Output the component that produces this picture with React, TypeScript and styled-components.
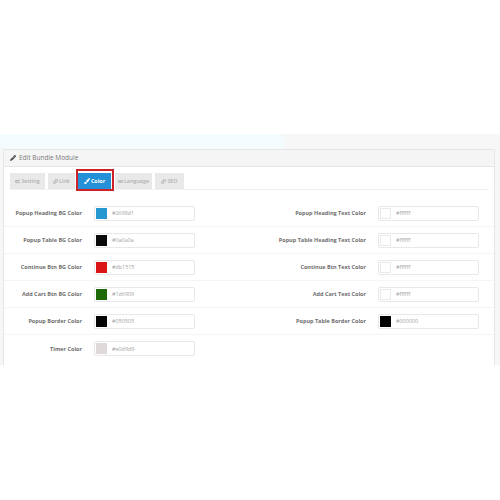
import React from 'react';
import styled, { createGlobalStyle } from 'styled-components';
import { FaCogs, FaLanguage, FaLink, FaPaintBrush, FaPencilAlt } from 'react-icons/fa';

const GlobalStyle = createGlobalStyle`
  html, body {
    margin: 0;
    padding: 0;
    background: #fff;
  }
  * {
    box-sizing: border-box;
  }
`;

const leftFields = [
  { label: 'Popup Heading BG Color', value: '#2698d1', color: '#2698d1' },
  { label: 'Popup Table BG Color', value: '#0a0a0a', color: '#0a0a0a' },
  { label: 'Continue Btn BG Color', value: '#db1515', color: '#db1515' },
  { label: 'Add Cart Btn BG Color', value: '#1d6909', color: '#1d6909' },
  { label: 'Popup Border Color', value: '#050505', color: '#050505' },
  { label: 'Timer Color', value: '#e0d9d9', color: '#e0d9d9' },
];

const rightFields = [
  { label: 'Popup Heading Text Color', value: '#ffffff', color: '#ffffff' },
  { label: 'Popup Table Heading Text Color', value: '#ffffff', color: '#ffffff' },
  { label: 'Continue Btn Text Color', value: '#ffffff', color: '#ffffff' },
  { label: 'Add Cart Text Color', value: '#ffffff', color: '#ffffff' },
  { label: 'Popup Table Border Color', value: '#000000', color: '#000000' },
];

const tabs = [
  { name: 'Setting', icon: <FaCogs />, width: 35 },
  { name: 'Link', icon: <FaLink />, width: 27 },
  { name: 'Color', icon: <FaPaintBrush />, width: 33, active: true },
  { name: 'Language', icon: <FaLanguage />, width: 37 },
  { name: 'SEO', icon: <FaLink />, width: 29 },
];

const App: React.FC = () => {
  const rows = leftFields.map((left, i) => ({ left, right: rightFields[i] }));

  return (
    <>
      <GlobalStyle />
      <Screen>
        <Page>
          <NoticeBand />
          <Panel>
            <PanelHeading>
              <FaPencilAlt />
              Edit Bundle Module
            </PanelHeading>
            <PanelBody>
              <TabBar>
                {tabs.map((tab) => (
                  <Tab key={tab.name} $active={tab.active} $width={tab.width}>
                    {tab.icon}
                    {tab.name}
                  </Tab>
                ))}
              </TabBar>
              <Form>
                {rows.map(({ left, right }) => (
                  <Row key={left.label}>
                    <Field>
                      <FieldLabel>{left.label}</FieldLabel>
                      <ColorInput>
                        <Swatch $color={left.color} />
                        <ColorValue>{left.value}</ColorValue>
                      </ColorInput>
                    </Field>
                    {right && (
                      <Field>
                        <FieldLabel>{right.label}</FieldLabel>
                        <ColorInput>
                          <Swatch $color={right.color} />
                          <ColorValue>{right.value}</ColorValue>
                        </ColorInput>
                      </Field>
                    )}
                  </Row>
                ))}
              </Form>
            </PanelBody>
          </Panel>
        </Page>
      </Screen>
    </>
  );
};

export default App;

const Screen = styled.div`
  width: 500px;
  height: 500px;
  padding-top: 134px;
  overflow: hidden;
  background: #fff;
  font-family: 'Open Sans', 'Liberation Sans', sans-serif;
`;

const Page = styled.div`
  height: 231px;
  overflow: hidden;
  background: #f7f7f7;
`;

const NoticeBand = styled.div`
  width: 284px;
  height: 15px;
  background: #f3fbfd;
`;

const Panel = styled.div`
  height: 216px;
  margin: 0 5px 0 3px;
  border: 1px solid #e6e6e6;
  border-bottom: 0;
  background: #fff;
`;

const PanelHeading = styled.div`
  display: flex;
  align-items: center;
  gap: 3px;
  height: 17px;
  padding-left: 6px;
  border-bottom: 1px solid #e6e6e6;
  background: #f5f5f5;
  color: #7a7a7a;
  font-size: 6.5px;
  line-height: 1;

  svg {
    width: 6px;
    height: 6px;
    color: #444;
  }
`;

const PanelBody = styled.div`
  padding: 6px 5px 0 6px;
`;

const TabBar = styled.div`
  display: flex;
  gap: 3px;
  height: 17px;
  border-bottom: 1px solid #f0f0f0;
`;

const Tab = styled.div<{ $active?: boolean; $width: number }>`
  position: relative;
  display: flex;
  align-items: center;
  justify-content: center;
  gap: 1px;
  width: ${(p) => p.$width}px;
  height: 16px;
  margin-right: ${(p) => (p.$active ? '1px' : '0')};
  background: ${(p) => (p.$active ? '#2390d8' : '#e9e9e9')};
  color: ${(p) => (p.$active ? '#fff' : '#b0b0b0')};
  font-size: 5.4px;
  font-weight: ${(p) => (p.$active ? 700 : 600)};

  svg {
    width: ${(p) => (p.$active ? '6px' : '5px')};
    height: ${(p) => (p.$active ? '6px' : '5px')};
  }

  ${(p) =>
    p.$active &&
    `
    &::after {
      content: '';
      position: absolute;
      inset: -4px -3px -2px -2px;
      border: 2px solid #cc2229;
    }
  `}
`;

const Form = styled.div`
  margin: 0 -5px 0 -6px;
  padding-top: 10px;
`;

const Row = styled.div`
  display: grid;
  grid-template-columns: 284px 1fr;
  align-items: center;
  height: 27px;
  padding-left: 6px;
  border-bottom: 1px solid #f5f5f5;

  &:last-child {
    border-bottom: 0;
  }
`;

const Field = styled.div`
  display: flex;
  align-items: center;
  gap: 12px;
`;

const FieldLabel = styled.label`
  width: 72px;
  flex: none;
  display: flex;
  justify-content: flex-end;
  white-space: nowrap;
  color: #6e6e6e;
  font-size: 5.5px;
  font-weight: 700;
`;

const ColorInput = styled.div`
  display: flex;
  align-items: center;
  flex: none;
  width: 101px;
  height: 15px;
  padding-left: 1px;
  border: 1px solid #e8e8e8;
  border-radius: 2px;
  background: #fff;
`;

const Swatch = styled.span<{ $color: string }>`
  width: 11px;
  height: 11px;
  flex: none;
  background: ${(p) => p.$color};
  border: ${(p) => (p.$color === '#ffffff' ? '1px solid #eaeaea' : '0')};
`;

const ColorValue = styled.span`
  margin-left: 5px;
  color: #a3a3a3;
  font-size: 5.4px;
`;
